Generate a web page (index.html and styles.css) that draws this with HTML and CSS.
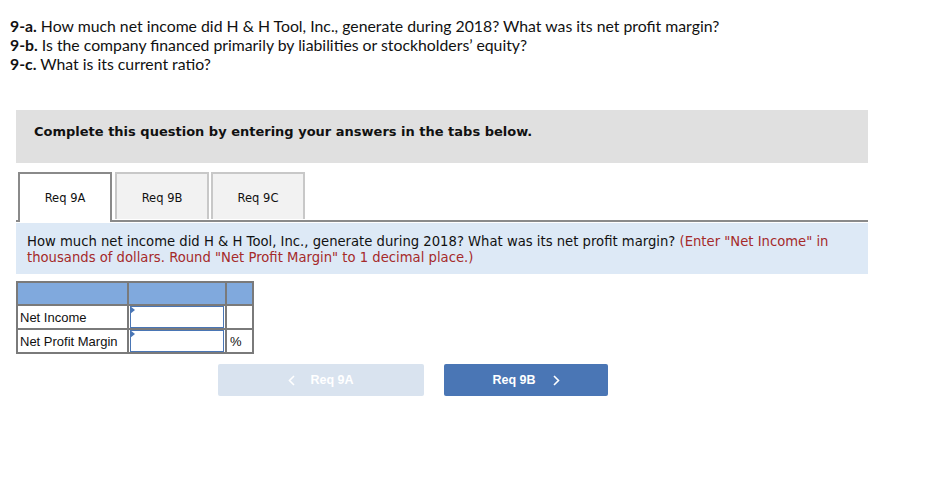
FILE: index.html
```html
<!DOCTYPE html>
<html lang="en">
<head>
    <meta charset="UTF-8">
    <title>Req 9A</title>
    <link rel="stylesheet" href="styles.css">
</head>
<body>

<div class="questions">
    <div><b>9-a.</b> How much net income did H &amp; H Tool, Inc., generate during 2018? What was its net profit margin?</div>
    <div><b>9-b.</b> Is the company financed primarily by liabilities or stockholders’ equity?</div>
    <div><b>9-c.</b> What is its current ratio?</div>
</div>

<div class="instructions">Complete this question by entering your answers in the tabs below.</div>

<div class="tabs">
    <div class="tab active">Req 9A</div>
    <div class="tab">Req 9B</div>
    <div class="tab">Req 9C</div>
</div>

<div class="prompt">
    How much net income did H &amp; H Tool, Inc., generate during 2018? What was its net profit margin?
    <span class="hint">(Enter "Net Income" in thousands of dollars. Round "Net Profit Margin" to 1 decimal place.)</span>
</div>

<table class="answers">
    <tr class="head">
        <td class="c1"></td>
        <td class="c2"></td>
        <td class="c3"></td>
    </tr>
    <tr>
        <td class="c1">Net Income</td>
        <td class="c2"><div class="field"></div></td>
        <td class="c3"></td>
    </tr>
    <tr>
        <td class="c1">Net Profit Margin</td>
        <td class="c2"><div class="field"></div></td>
        <td class="c3">%</td>
    </tr>
</table>

<div class="nav">
    <button class="prev">
        <svg class="chev left" width="7" height="11" viewBox="0 0 7 11"><path d="M6 1 L1.5 5.5 L6 10" fill="none" stroke="#fff" stroke-width="1.6"/></svg>
        Req 9A
    </button>
    <button class="next">
        Req 9B
        <svg class="chev right" width="7" height="11" viewBox="0 0 7 11"><path d="M1 1 L5.5 5.5 L1 10" fill="none" stroke="#fff" stroke-width="1.6"/></svg>
    </button>
</div>

</body>
</html>
```

FILE: styles.css
```css
body {
    margin: 0;
    padding: 16px 0 0 10px;
    width: 858px;
    background: #ffffff;
    color: #111;
}
.questions {
    font-family: "Lato", "Open Sans", sans-serif;
    font-size: 15.8px;
    line-height: 19px;
}
.questions b {
    font-weight: bold;
}
.instructions {
    margin: 37px 0 0 6px;
    height: 53px;
    box-sizing: border-box;
    padding: 14px 0 0 18px;
    background: #e0e0e0;
    font-family: "DejaVu Sans", Verdana, sans-serif;
    font-size: 13px;
    font-weight: bold;
}
.tabs {
    display: flex;
    margin: 9px 0 0 6px;
    border-bottom: 2px solid #8a8a8a;
    height: 48px;
}
.tab {
    width: 94px;
    height: 47px;
    box-sizing: border-box;
    margin-right: 2px;
    border: 2px solid #c8c8c8;
    border-bottom: none;
    background: #f2f2f2;
    font-family: "DejaVu Sans", Verdana, sans-serif;
    font-size: 11.5px;
    text-align: center;
    line-height: 48px;
}
.tab.active {
    margin-left: 2px;
    margin-right: 3px;
    height: 50px;
    border-color: #8a8a8a;
    border-bottom: none;
    background: #ffffff;
    position: relative;
    z-index: 1;
}
.prompt {
    margin: 1px 0 0 6px;
    padding: 11px 30px 8px 11px;
    background: #dde9f6;
    font-family: "DejaVu Sans", Verdana, sans-serif;
    font-size: 13.2px;
    line-height: 16px;
}
.hint {
    color: #a52a2a;
}
.answers {
    margin: 7px 0 0 6px;
    border-collapse: collapse;
    border: 2px solid #7a7a7a;
    font-family: "Liberation Sans", Arial, sans-serif;
    font-size: 13px;
}
.answers td {
    border: 2px solid #7a7a7a;
    height: 21px;
    padding: 0 2px;
}
.answers .head td {
    background: #80a9dd;
    height: 21px;
}
.answers .c1 {
    width: 105px;
}
.answers .c2 {
    width: 96px;
    padding: 0;
}
.answers .c3 {
    width: 19px;
    padding: 0 3px;
}
.field {
    height: 20px;
    margin: 0 1px;
    border: 1px solid #4a76b5;
    background: #fff;
    position: relative;
}
.field::before {
    content: "";
    position: absolute;
    left: -1px;
    top: -1px;
    border-top: 4px solid transparent;
    border-bottom: 4px solid transparent;
    border-left: 5px solid #4a76b5;
}
.nav {
    display: flex;
    margin: 10px 0 0 208px;
    gap: 20px;
}
button {
    height: 32px;
    border: none;
    border-radius: 2px;
    color: #ffffff;
    font-family: "Liberation Sans", Arial, sans-serif;
    font-size: 12.5px;
    font-weight: bold;
    padding: 0;
    display: flex;
    align-items: center;
    justify-content: center;
}
.prev {
    width: 206px;
    background: #d9e3ef;
}
.next {
    width: 164px;
    background: #4a76b5;
}
.chev.left {
    margin-right: 15px;
}
.chev.right {
    margin-left: 17px;
}
```
